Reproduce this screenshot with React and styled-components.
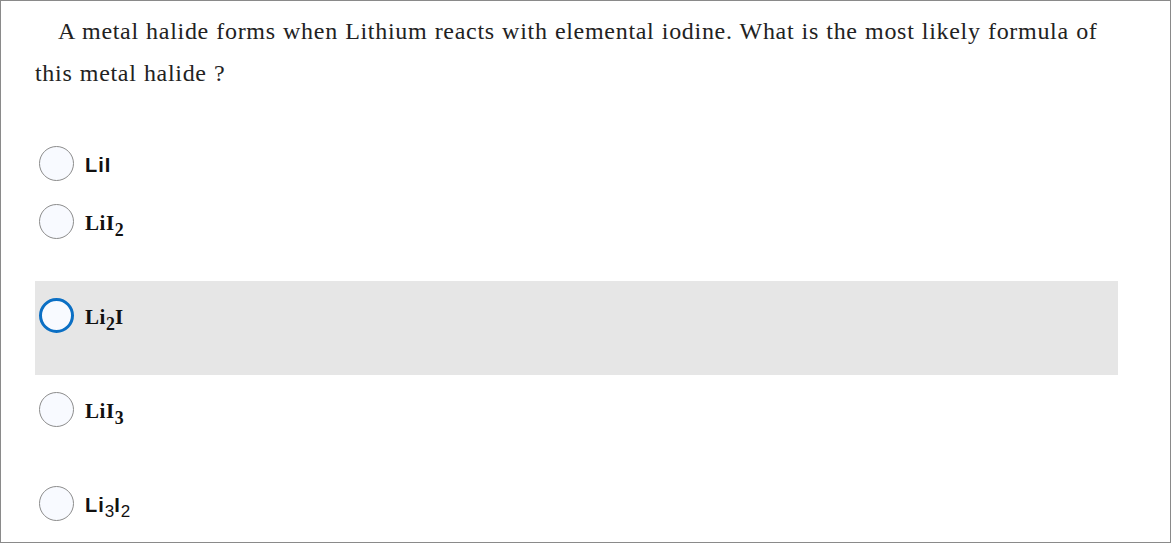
import styled, { createGlobalStyle } from "styled-components";

const GlobalStyle = createGlobalStyle`
  html, body {
    margin: 0;
    padding: 0;
    background: #fff;
  }
  * {
    box-sizing: border-box;
  }
`;

const Frame = styled.div`
  width: 1171px;
  height: 543px;
  border: 1px solid #8a8a8a;
  padding: 9px 52px 0 34px;
  overflow: hidden;
`;

const Question = styled.p`
  margin: 0;
  font-family: "Liberation Serif", "Times New Roman", serif;
  font-size: 24px;
  line-height: 42px;
  letter-spacing: 0.7px;
  word-spacing: 0.6px;
  color: #222;
  text-indent: 23px;
`;

const Options = styled.div`
  margin-top: 35px;
  display: flex;
  flex-direction: column;
`;

const Option = styled.label`
  display: flex;
  align-items: flex-start;
  gap: 11px;
  height: ${(p) => (p.$compact ? "58px" : "94px")};
  padding: 17px 0 0 4px;
  background: ${(p) => (p.$active ? "#e6e6e6" : "transparent")};
  cursor: pointer;
`;

const Radio = styled.span`
  flex: none;
  width: 35px;
  height: 35px;
  border-radius: 50%;
  background: #f8faff;
  border: ${(p) => (p.$active ? "3px solid #0b6fc4" : "1px solid #8c8c8c")};
`;

const Label = styled.span`
  font-family: ${(p) =>
    p.$sans
      ? '"Liberation Sans", Arial, sans-serif'
      : '"Liberation Serif", "Times New Roman", serif'};
  font-weight: 700;
  font-size: ${(p) => (p.$sans ? "20px" : "21px")};
  letter-spacing: ${(p) => (p.$sans ? "1px" : "0.6px")};
  line-height: 35px;
  padding-top: 2px;
  color: #111;

  sub {
    font-size: 0.85em;
    font-weight: ${(p) => (p.$sans ? 400 : 700)};
    line-height: 0;
    vertical-align: -0.32em;
    letter-spacing: 0;
  }
`;

const choices = [
  { id: "a", sans: true, compact: true, text: <>LiI</> },
  { id: "b", text: <>LiI<sub>2</sub></> },
  { id: "c", active: true, text: <>Li<sub>2</sub>I</> },
  { id: "d", text: <>LiI<sub>3</sub></> },
  { id: "e", sans: true, text: <>Li<sub>3</sub>I<sub>2</sub></> },
];

export default function App() {
  return (
    <>
      <GlobalStyle />
      <Frame>
        <Question>
          A metal halide forms when Lithium reacts with elemental iodine. What
          is the most likely formula of this metal halide ?
        </Question>
        <Options>
          {choices.map((c) => (
            <Option key={c.id} $active={c.active} $compact={c.compact}>
              <Radio $active={c.active} />
              <Label $sans={c.sans}>{c.text}</Label>
            </Option>
          ))}
        </Options>
      </Frame>
    </>
  );
}
